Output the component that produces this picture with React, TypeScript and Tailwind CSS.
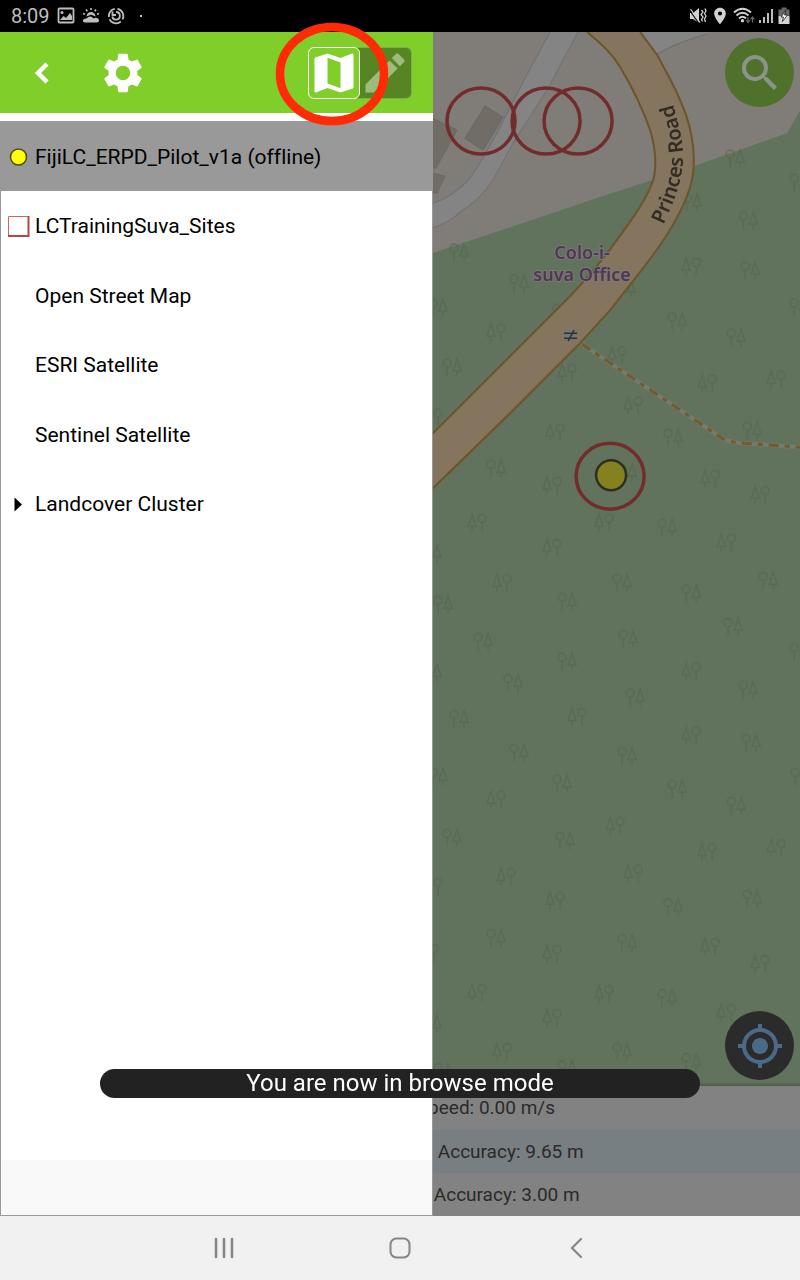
import type { ReactNode } from "react";
import { MdEdit, MdMap, MdMyLocation, MdPlace, MdSearch, MdSettings } from "react-icons/md";

type Tree = [x: number, y: number, kind: "RT" | "TR"];

const TREES: Tree[] = [
  [459, 252, "RT"], [692, 202, "RT"], [735, 158, "RT"], [748, 220, "RT"], [799, 182, "RT"],
  [691, 266, "TR"], [750, 270, "RT"], [519, 283, "RT"], [438, 307, "RT"], [496, 332, "TR"],
  [562, 312, "RT"], [452, 367, "RT"], [567, 372, "TR"], [626, 288, "RT"], [677, 321, "RT"],
  [736, 337, "RT"], [799, 307, "RT"], [617, 355, "TR"], [633, 405, "TR"], [707, 383, "TR"],
  [776, 379, "TR"], [433, 417, "TR"], [555, 432, "TR"], [673, 437, "RT"], [752, 430, "RT"],
  [496, 468, "RT"], [552, 485, "TR"], [627, 472, "RT"], [710, 478, "TR"], [760, 494, "TR"],
  [477, 522, "TR"], [604, 522, "TR"], [667, 527, "RT"], [432, 553, "RT"], [552, 547, "TR"],
  [726, 542, "TR"], [502, 582, "TR"], [622, 582, "RT"], [691, 593, "RT"], [768, 580, "RT"],
  [443, 604, "RT"], [567, 601, "RT"], [733, 626, "RT"], [483, 641, "RT"], [628, 638, "RT"],
  [799, 651, "RT"], [567, 661, "RT"], [432, 672, "RT"], [691, 671, "TR"], [513, 682, "RT"],
  [635, 697, "RT"], [748, 689, "RT"], [459, 718, "RT"], [577, 716, "TR"], [691, 735, "TR"],
  [751, 742, "RT"], [519, 752, "RT"], [627, 755, "RT"], [438, 776, "RT"], [562, 783, "RT"],
  [677, 788, "RT"], [800, 776, "RT"], [496, 799, "TR"], [736, 805, "RT"], [615, 825, "TR"],
  [452, 837, "RT"], [565, 840, "RT"], [707, 851, "TR"], [776, 847, "TR"], [506, 876, "TR"],
  [633, 873, "TR"], [433, 886, "TR"], [555, 900, "TR"], [673, 906, "RT"], [752, 898, "RT"],
  [496, 937, "RT"], [627, 942, "RT"], [710, 946, "TR"], [552, 953, "TR"], [429, 952, "TR"],
  [760, 963, "TR"], [477, 992, "TR"], [604, 993, "TR"], [667, 997, "RT"], [726, 1012, "TR"],
  [432, 1023, "RT"], [552, 1017, "TR"], [502, 1051, "TR"], [622, 1051, "RT"],
  [691, 1061, "RT"], [443, 1071, "RT"], [567, 1068, "RT"],
];

const ROAD_LEFT =
  "M587 32 C600 43 611 52 620 67 C632 87 641 104 650 130 C656 150 657 170 652 183 C646 199 634 217 607 253 C594 270 580 287 556 310 L433 433";
const ROAD_RIGHT =
  "M640 32 L657 55 C668 75 677 90 686 115 C694 140 697 163 690 187 C683 210 665 240 643 268 L610 310 L580 343 L510 413 L433 488";
const ROAD_FILL =
  "M587 32 C600 43 611 52 620 67 C632 87 641 104 650 130 C656 150 657 170 652 183 C646 199 634 217 607 253 C594 270 580 287 556 310 L433 433 L433 488 L510 413 L580 343 L610 310 L643 268 C665 240 683 210 690 187 C697 163 694 140 686 115 C677 90 668 75 657 55 L640 32 Z";

function MapCanvas() {
  return (
    <svg
      className="absolute inset-0 h-full w-full"
      viewBox="433 32 367 1054"
      preserveAspectRatio="xMinYMin slice"
      role="img"
      aria-label="Street map"
    >
      <defs>
        <g id="treesRT" fill="none" stroke="#57664f" strokeWidth="1.5">
          <circle cx="-5" cy="-4" r="4" />
          <path d="M-5 0V9M5 -8L1 4H9ZM5 4V9" />
        </g>
        <g id="treesTR" fill="none" stroke="#57664f" strokeWidth="1.5">
          <circle cx="5" cy="-4" r="4" />
          <path d="M5 0V9M-5 -8L-9 4H-1ZM-5 4V9" />
        </g>
        <path id="roadLabel" d="M663 225 C675 200 682 180 683 158 C683 138 677 120 669 90" />
      </defs>

      <rect x="433" y="32" width="367" height="1054" fill="#62735d" />
      <path d="M433 32H800V110L787 133L697 165L652 180L600 197L433 253Z" fill="#807d78" />
      <path
        d="M550 32 L523 82 L497 133 L480 163 Q469 182 457 190 Q446 199 433 203 V228 Q450 222 460 212 Q480 200 493 180 L513 143 L547 90 L578 32Z"
        fill="#848484"
      />
      <path
        d="M550 32 L523 82 L497 133 L480 163 Q469 182 457 190 Q446 199 433 203 M433 228 Q450 222 460 212 Q480 200 493 180 L513 143 L547 90 L578 32"
        fill="none"
        stroke="#707072"
        strokeWidth="1"
      />
      <path d="M640 32L657 54Q680 40 713 32Z" fill="#848484" />
      <path d="M657 54Q680 41 708 34" fill="none" stroke="#6e6e73" strokeWidth="1.2" />
      <g fill="#726c67" stroke="#6c6764" strokeWidth="1">
        <path d="M485 106L503 117L483 150L465 138Z" />
        <path d="M432 118L457 130L436 168H432Z" />
        <path d="M432 173L445 176L437 193H432Z" />
      </g>

      <g opacity="0.65">
        {TREES.map(([x, y, kind]) => (
          <use key={`${x}-${y}`} href={kind === "RT" ? "#treesRT" : "#treesTR"} x={x} y={y} />
        ))}
      </g>

      <path d={ROAD_FILL} fill="#85755f" />
      <path d={ROAD_LEFT} fill="none" stroke="#6b5529" strokeWidth="2" />
      <path d={ROAD_RIGHT} fill="none" stroke="#6b5529" strokeWidth="2" />

      <path d="M582 344L722 438Q728 442 745 443L800 447" fill="none" stroke="#757b6e" strokeWidth="4" />
      <path
        d="M582 344L722 438Q728 442 745 443L800 447"
        fill="none"
        stroke="#755b2c"
        strokeWidth="3"
        strokeDasharray="10 6 5 6"
      />

      <rect x="564" y="330" width="13" height="11" fill="#777672" />
      <path d="M564 333H577M564 338H577M568 341L574 330" fill="none" stroke="#2e3133" strokeWidth="1.5" />

      <g
        fontFamily="'Noto Sans', sans-serif"
        fontSize="18"
        fontWeight="600"
        fill="#4e3850"
        stroke="#7b7779"
        strokeWidth="2"
        paintOrder="stroke"
        textAnchor="middle"
      >
        <text x="582" y="259">Colo-i-</text>
        <text x="582" y="281">suva Office</text>
      </g>
      <text fontFamily="'Noto Sans', sans-serif" fontSize="20" fontWeight="600" fill="#322c25">
        <textPath href="#roadLabel">Princes Road</textPath>
      </text>

      <g fill="none" stroke="#732c2c" strokeWidth="3.5">
        <ellipse cx="481" cy="121" rx="34" ry="33" />
        <ellipse cx="546" cy="121" rx="34" ry="33" />
        <ellipse cx="578" cy="121" rx="34" ry="33" />
        <ellipse cx="610" cy="476" rx="34" ry="33" />
      </g>
      <circle cx="611" cy="475" r="15" fill="#85811e" stroke="#2c2e26" strokeWidth="2.5" />
    </svg>
  );
}

function StatusBar() {
  return (
    <header className="flex h-8 shrink-0 items-center justify-between bg-black pr-[9px] pl-[11px] text-[#bdbdbd]">
      <div className="flex items-center gap-[7px]">
        <span className="text-xl leading-8">8:09</span>
        <svg width="18" height="18" viewBox="0 0 18 18" aria-hidden="true">
          <path d="M2.5 1.5H15.5Q16.5 1.5 16.5 2.5V14.5Q16.5 15.5 15.5 15.5H2.5Q1.5 15.5 1.5 14.5V2.5Q1.5 1.5 2.5 1.5Z" fill="none" stroke="currentColor" strokeWidth="1.8" />
          <circle cx="5" cy="5.5" r="1.5" fill="currentColor" />
          <path d="M3 13L6.5 9L9 11L13 6L15 9V13Z" fill="currentColor" />
        </svg>
        <svg width="18" height="18" viewBox="0 0 18 18" aria-hidden="true">
          <path d="M4.5 9.5A4.5 4.5 0 0 1 13.5 9.5L11 8.5Q9 7 7 8.5Z" fill="currentColor" />
          <path d="M9 1V3M4 2.5L5.3 4.3M14 2.5L12.7 4.3M1 6.5L3 7.3M17 6.5L15 7.3" stroke="currentColor" strokeWidth="1.6" />
          <path d="M3 15.5Q0.5 15 1 13Q2 11 4.5 11.5Q7 8.5 10 10L11.5 11.5Q14 10 16.5 12Q18 15 15 15.5Z" fill="currentColor" />
        </svg>
        <svg width="18" height="18" viewBox="0 0 18 18" fill="none" stroke="currentColor" strokeWidth="1.8" aria-hidden="true">
          <path d="M10.5 1.8A7.3 7.3 0 0 1 15.5 12.3" />
          <path d="M13.8 14.5A7.3 7.3 0 0 1 2.5 12.3" />
          <path d="M1.8 10A7.3 7.3 0 0 1 7.8 1.8" />
          <path d="M9 5A3.8 3.8 0 1 1 5.3 9.5" />
          <path d="M5.5 4.5V8H9" />
        </svg>
        <span className="ml-2 h-0.5 w-0.5 bg-current" />
      </div>
      <div className="flex items-center gap-[3px] text-[#d2d2d2]">
        <svg width="18" height="18" viewBox="0 0 18 18" aria-hidden="true">
          <path d="M1 6H4L10 1V16L4 12H1Z" fill="currentColor" />
          <path d="M0 2.5L10 16.5" stroke="#000" strokeWidth="1.2" />
          <path d="M1.5 2L11 15.5" stroke="currentColor" strokeWidth="1.2" />
          <path d="M12.5 3L14 5L12 7.5L14 10L12.5 12.5L13.5 14.5M16 1.5L17 4L15.5 6.5L17 9L15.5 12L16.5 15" fill="none" stroke="currentColor" strokeWidth="1.3" />
        </svg>
        <MdPlace size={20} />
        <svg width="22" height="18" viewBox="0 0 22 18" aria-hidden="true">
          <g fill="none" stroke="currentColor" strokeWidth="1.8">
            <path d="M1 5.5Q9.5 -2 18 5.5" />
            <path d="M3.5 8.5Q9.5 3 15.5 8.5" />
            <path d="M6 11.5Q9.5 8 13 11.5" />
          </g>
          <circle cx="9.5" cy="13.8" r="1.7" fill="currentColor" />
          <path d="M15 10V15M13 13L15 15.5L17 13M19.5 15.5V10.5M17.5 12.5L19.5 10L21.5 12.5" fill="none" stroke="#666" strokeWidth="1.2" />
        </svg>
        <svg width="16" height="18" viewBox="0 0 16 18" aria-hidden="true">
          <path d="M2 13V16M6 10V16M10 6V16M14 2V16" stroke="currentColor" strokeWidth="1.8" />
        </svg>
        <svg width="14" height="18" viewBox="0 0 14 18" aria-hidden="true">
          <path d="M4.5 0.5H9.5V2.5H12.5V9H1.5V2.5H4.5Z" fill="#666" />
          <path d="M1.5 9H12.5V17H1.5Z" fill="currentColor" />
          <path d="M8.5 3.5L4 10H6.5L5.5 14.5L10.5 8H7.5Z" fill="#fff" stroke="#000" strokeWidth="0.7" />
        </svg>
      </div>
    </header>
  );
}

function DrawerHeader() {
  return (
    <div className="flex h-[81px] shrink-0 items-center bg-[#80ce29] pr-[21px] pl-4 text-white">
      <button type="button" aria-label="Back" className="flex">
        <svg width="48" height="48" viewBox="0 0 48 48" aria-hidden="true">
          <path d="M31 15L22 24L31 33" fill="none" stroke="currentColor" strokeWidth="4.5" />
        </svg>
      </button>
      <button type="button" aria-label="Settings" className="ml-[35px] flex">
        <MdSettings size={48} />
      </button>
      <div className="relative ml-auto flex">
        <button
          type="button"
          aria-label="Browse mode"
          aria-pressed="true"
          className="z-[1] flex size-[52px] items-center justify-center rounded-md border border-white bg-[#80ce29]"
        >
          <MdMap className="size-[52px] shrink-0" />
        </button>
        <button
          type="button"
          aria-label="Edit mode"
          aria-pressed="false"
          className="-ml-1 flex h-[52px] w-14 items-center justify-end rounded-r-md border border-l-0 border-[#7eb048] bg-[#588524] text-[#9dbc7c]"
        >
          <MdEdit className="size-[52px] shrink-0" />
        </button>
        <svg
          className="pointer-events-none absolute -top-6 -left-8 z-10 overflow-visible"
          width="114"
          height="104"
          viewBox="0 0 114 104"
          aria-hidden="true"
        >
          <ellipse cx="56" cy="51" rx="52" ry="47" fill="none" stroke="#ff2a06" strokeWidth="8.5" />
        </svg>
      </div>
    </div>
  );
}

const LAYERS: { name: string; icon?: ReactNode }[] = [
  {
    name: "LCTrainingSuva_Sites",
    icon: (
      <svg width="22" height="22" viewBox="0 0 22 22" aria-hidden="true">
        <path d="M0.5 20V0.5H20" fill="none" stroke="#c66" strokeWidth="1" />
        <path d="M0 20H20.5V0" fill="none" stroke="#b8444a" strokeWidth="2" />
      </svg>
    ),
  },
  { name: "Open Street Map" },
  { name: "ESRI Satellite" },
  { name: "Sentinel Satellite" },
  {
    name: "Landcover Cluster",
    icon: (
      <svg width="22" height="16" viewBox="0 0 22 16" aria-hidden="true">
        <path d="M6.5 0.5L14 7.5L6.5 14.5Z" fill="#000" />
      </svg>
    ),
  },
];

const LAYER_ROW =
  "flex w-full items-center gap-[5px] pt-[3px] pl-[7px] text-left text-[21px] [font-variant-ligatures:none]";

function Drawer() {
  return (
    <aside className="flex w-[54.1%] shrink-0 flex-col bg-white">
      <DrawerHeader />
      <div className="mt-2 flex flex-1 flex-col border border-t-0 border-[#999]">
        <div className="flex h-[70px] bg-[#999]">
          <button type="button" className={LAYER_ROW}>
            <svg width="22" height="22" viewBox="0 0 22 22" aria-hidden="true">
              <circle cx="10.5" cy="10" r="8" fill="#ff0" stroke="#4a4a20" strokeWidth="1.5" />
            </svg>
            FijiLC_ERPD_Pilot_v1a (offline)
          </button>
        </div>
        <ul className="grid h-[347px] grid-rows-5">
          {LAYERS.map((layer) => (
            <li key={layer.name} className="flex">
              <button type="button" className={LAYER_ROW}>
                <span className="flex w-[22px] justify-center">{layer.icon}</span>
                {layer.name}
              </button>
            </li>
          ))}
        </ul>
        <div className="mt-auto h-[55px] bg-[#f9f9f9]" />
      </div>
    </aside>
  );
}

function PositionInfo() {
  return (
    <div className="overflow-hidden bg-[#828282] text-[19px] text-[#2a2a2a]">
      <p className="-ml-4 h-11 leading-[44px] whitespace-nowrap">Speed: 0.00 m/s</p>
      <p className="h-[43px] bg-[#787f83] pl-[5px] leading-[43px] whitespace-nowrap">Accuracy: 9.65 m</p>
      <p className="h-[43px] pl-px leading-[43px] whitespace-nowrap">Accuracy: 3.00 m</p>
    </div>
  );
}

function NavBar() {
  return (
    <nav className="flex h-16 shrink-0 items-center justify-center gap-[152px] bg-[#f1f1f1] text-[#858585]">
      <button type="button" aria-label="Recent apps">
        <svg width="24" height="24" viewBox="0 0 24 24" fill="none" stroke="currentColor" strokeWidth="2.5" strokeLinecap="round">
          <path d="M4 3V21M12 3V21M20 3V21" />
        </svg>
      </button>
      <button type="button" aria-label="Home">
        <svg width="24" height="24" viewBox="0 0 24 24" fill="none" stroke="currentColor" strokeWidth="2">
          <rect x="2.5" y="2.5" width="19" height="19" rx="6" />
        </svg>
      </button>
      <button type="button" aria-label="Go back">
        <svg width="24" height="24" viewBox="0 0 24 24" fill="none" stroke="currentColor" strokeWidth="2.2" strokeLinecap="round">
          <path d="M17 3L8 12L17 21" />
        </svg>
      </button>
    </nav>
  );
}

export default function App() {
  return (
    <div className="flex min-h-screen flex-col font-['Roboto',sans-serif] text-black">
      <StatusBar />
      <main className="relative flex flex-1">
        <Drawer />
        <section className="flex min-w-0 flex-1 flex-col">
          <div className="relative flex-1 overflow-hidden">
            <MapCanvas />
            <button
              type="button"
              aria-label="Search"
              className="absolute top-1.5 right-1.5 flex size-[69px] items-center justify-center rounded-full bg-[#50712b] text-[#8b948b]"
            >
              <MdSearch size={48} />
            </button>
            <button
              type="button"
              aria-label="My location"
              className="absolute right-1.5 bottom-1.5 flex size-[69px] items-center justify-center rounded-full bg-[#2b2b2b] text-[#4b6a86]"
            >
              <MdMyLocation size={48} />
            </button>
            <div className="absolute inset-x-0 bottom-0 h-1 bg-linear-to-b from-transparent to-black/20" />
          </div>
          <PositionInfo />
        </section>
        <div
          role="status"
          className="absolute inset-x-0 bottom-[118px] mx-auto w-3/4 rounded-full bg-[#222] text-center text-2xl leading-[29px] text-white"
        >
          You are now in browse mode
        </div>
      </main>
      <NavBar />
    </div>
  );
}
